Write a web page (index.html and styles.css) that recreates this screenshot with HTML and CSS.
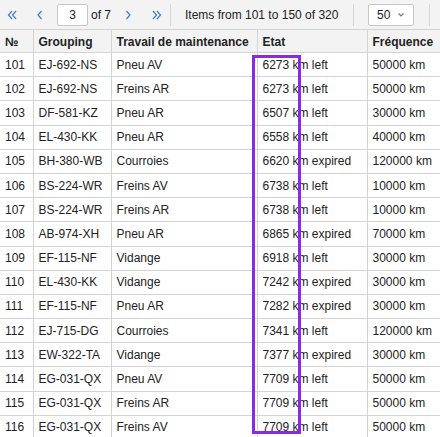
FILE: index.html
```html
<!DOCTYPE html>
<html lang="en">
<head>
    <meta charset="UTF-8">
    <title>Maintenance</title>
    <link rel="stylesheet" href="styles.css">
</head>
<body>
    <div class="pager">
        <button class="nav-btn first" title="First">
            <svg width="10" height="10" viewBox="0 0 10 10"><polyline points="5,1 1.5,5 5,9"/><polyline points="9,1 5.5,5 9,9"/></svg>
        </button>
        <button class="nav-btn prev" title="Previous">
            <svg width="10" height="10" viewBox="0 0 10 10"><polyline points="6.5,1 3,5 6.5,9"/></svg>
        </button>
        <input class="page-input" type="text" value="3">
        <span class="page-of">of 7</span>
        <button class="nav-btn next" title="Next">
            <svg width="10" height="10" viewBox="0 0 10 10"><polyline points="3.5,1 7,5 3.5,9"/></svg>
        </button>
        <button class="nav-btn last" title="Last">
            <svg width="10" height="10" viewBox="0 0 10 10"><polyline points="1,1 4.5,5 1,9"/><polyline points="5,1 8.5,5 5,9"/></svg>
        </button>
        <span class="sep"></span>
        <span class="items-info">Items from 101 to 150 of 320</span>
        <span class="sep"></span>
        <div class="page-size">
            <span>50</span>
            <svg width="8" height="6" viewBox="0 0 8 6"><polyline points="1.5,1.5 4,4 6.5,1.5"/></svg>
        </div>
        <span class="sep"></span>
    </div>

    <div class="grid-wrap">
        <table class="grid">
            <colgroup>
                <col style="width:33px">
                <col style="width:78px">
                <col style="width:146px">
                <col style="width:110px">
                <col style="width:100px">
            </colgroup>
            <thead>
                <tr>
                    <th>№</th>
                    <th>Grouping</th>
                    <th>Travail de maintenance</th>
                    <th>Etat</th>
                    <th>Fréquence</th>
                </tr>
            </thead>
            <tbody>
                <tr><td>101</td><td>EJ-692-NS</td><td>Pneu AV</td><td>6273 km left</td><td>50000 km</td></tr>
                <tr><td>102</td><td>EJ-692-NS</td><td>Freins AR</td><td>6273 km left</td><td>50000 km</td></tr>
                <tr><td>103</td><td>DF-581-KZ</td><td>Pneu AR</td><td>6507 km left</td><td>30000 km</td></tr>
                <tr><td>104</td><td>EL-430-KK</td><td>Pneu AR</td><td>6558 km left</td><td>40000 km</td></tr>
                <tr><td>105</td><td>BH-380-WB</td><td>Courroies</td><td>6620 km expired</td><td>120000 km</td></tr>
                <tr><td>106</td><td>BS-224-WR</td><td>Freins AV</td><td>6738 km left</td><td>10000 km</td></tr>
                <tr><td>107</td><td>BS-224-WR</td><td>Freins AR</td><td>6738 km left</td><td>10000 km</td></tr>
                <tr><td>108</td><td>AB-974-XH</td><td>Pneu AR</td><td>6865 km expired</td><td>70000 km</td></tr>
                <tr><td>109</td><td>EF-115-NF</td><td>Vidange</td><td>6918 km left</td><td>30000 km</td></tr>
                <tr><td>110</td><td>EL-430-KK</td><td>Vidange</td><td>7242 km expired</td><td>30000 km</td></tr>
                <tr><td>111</td><td>EF-115-NF</td><td>Pneu AR</td><td>7282 km expired</td><td>30000 km</td></tr>
                <tr><td>112</td><td>EJ-715-DG</td><td>Courroies</td><td>7341 km left</td><td>120000 km</td></tr>
                <tr><td>113</td><td>EW-322-TA</td><td>Vidange</td><td>7377 km expired</td><td>30000 km</td></tr>
                <tr><td>114</td><td>EG-031-QX</td><td>Pneu AV</td><td>7709 km left</td><td>50000 km</td></tr>
                <tr><td>115</td><td>EG-031-QX</td><td>Freins AR</td><td>7709 km left</td><td>50000 km</td></tr>
                <tr><td>116</td><td>EG-031-QX</td><td>Freins AV</td><td>7709 km left</td><td>50000 km</td></tr>
            </tbody>
        </table>
        <div class="highlight"></div>
    </div>
</body>
</html>
```

FILE: styles.css
```css
:root {
    --toolbar-bg: #f3f3f3;
    --head-bg: #f3f3f3;
    --line: #d3d3d3;
    --text: #222222;
    --link: #3b7fd0;
    --mark: #8a2be2;
}

html, body {
    overflow: hidden;
}

body {
    margin: 0;
    font-family: 'Liberation Sans', Arial, sans-serif;
    font-size: 12px;
    color: var(--text);
    background: #ffffff;
}

.pager {
    display: flex;
    align-items: center;
    height: 29px;
    background: var(--toolbar-bg);
    border-bottom: 1px solid var(--line);
}

.nav-btn {
    width: 24px;
    height: 22px;
    padding: 0;
    border: none;
    background: none;
    display: flex;
    align-items: center;
    justify-content: center;
    cursor: pointer;
}

.nav-btn.prev {
    margin-left: 4px;
}

.nav-btn.next {
    margin-left: 4px;
}

.nav-btn.last {
    margin-left: 5px;
}

.nav-btn svg polyline,
.page-size svg polyline {
    fill: none;
    stroke: var(--link);
    stroke-width: 1.2;
}

.page-size svg polyline {
    stroke: #777777;
}

.page-input {
    box-sizing: border-box;
    width: 31px;
    height: 22px;
    margin-left: 5px;
    border: 1px solid #c8c8c8;
    border-radius: 2px;
    background: #ffffff;
    font: inherit;
    color: var(--text);
    text-align: center;
    padding: 0;
}

.page-of {
    margin-left: 3px;
    width: 21px;
    white-space: nowrap;
}

.sep {
    width: 1px;
    height: 22px;
    background: #d8d8d8;
    margin: 0 14px 0 1px;
}

.items-info {
    width: 153px;
    margin-right: 14px;
    white-space: nowrap;
}

.page-size {
    box-sizing: border-box;
    width: 46px;
    height: 22px;
    margin-right: 15px;
    border: 1px solid #c8c8c8;
    border-radius: 2px;
    background: #ffffff;
    display: flex;
    align-items: center;
    justify-content: space-between;
    padding: 0 8px 0 8px;
}

.page-size + .sep {
    margin: 0;
}

.grid-wrap {
    position: relative;
}

.grid {
    table-layout: fixed;
    width: 467px;
    border-collapse: collapse;
}

.grid th,
.grid td {
    border: 1px solid var(--line);
    border-top: none;
    padding: 0 5px;
    text-align: left;
    white-space: nowrap;
    overflow: hidden;
}

.grid th:first-child,
.grid td:first-child {
    border-left: none;
}

.grid th {
    height: 20px;
    padding-top: 2px;
    background: var(--head-bg);
    font-weight: bold;
}

.grid td {
    height: 23.2px;
}

.highlight {
    position: absolute;
    left: 252px;
    top: 25px;
    width: 49px;
    height: 379px;
    box-sizing: border-box;
    border: 3px solid var(--mark);
    pointer-events: none;
}
```
